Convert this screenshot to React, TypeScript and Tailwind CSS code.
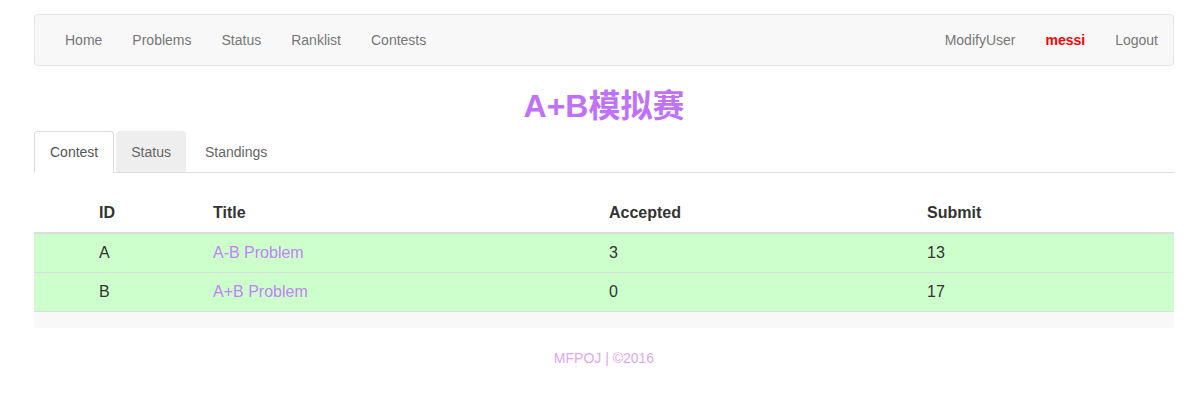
import React from "react";

const font = { fontFamily: '"Liberation Sans", Arial, "Noto Sans CJK SC", sans-serif' };

export default function App() {
  const navL = ["Home", "Problems", "Status", "Ranklist", "Contests"];
  const rows = [
    { id: "A", title: "A-B Problem", ac: "3", sub: "13" },
    { id: "B", title: "A+B Problem", ac: "0", sub: "17" },
  ];
  return (
    <div className="min-h-[409px] bg-white text-[14px] text-[#333]" style={font}>
      <div className="ml-[34px] w-[1140px] pt-[14px]">
        {/* navbar */}
        <div className="flex h-[52px] items-center justify-between rounded-[4px] border border-[#e7e7e7] bg-[#f8f8f8] px-[15px]">
          <div className="flex">
            {navL.map((t) => (
              <span key={t} className="px-[15px] leading-[20px] text-[#777]">{t}</span>
            ))}
          </div>
          <div className="-mr-[15px] flex">
            <span className="px-[15px] leading-[20px] text-[#777]">ModifyUser</span>
            <span className="px-[15px] font-bold leading-[20px] text-[#ff0000]">messi</span>
            <span className="px-[15px] leading-[20px] text-[#777]">Logout</span>
          </div>
        </div>

        {/* title */}
        <h2 className="mt-[24px] mb-[8px] text-center text-[32px] font-bold leading-[33px] text-[#bf72f7]">
          A+B模拟赛
        </h2>

        {/* tabs */}
        <div className="flex h-[42px] items-end border-b border-[#ddd]">
          <div className="-mb-px mr-[2px] flex h-[42px] items-center rounded-t-[4px] border border-b-white border-[#ddd] bg-white px-[15px] pt-[1px] text-[#555]">
            Contest
          </div>
          <div className="mr-[2px] flex h-[41px] items-center rounded-t-[4px] bg-[#eee] px-[15px] pt-[2px] text-[#666]">
            Status
          </div>
          <div className="flex h-[41px] items-center px-[17px] pt-[2px] text-[#666]">Standings</div>
        </div>

        {/* table */}
        <div className="mt-[21px] text-[16px]">
          <div className="flex h-[40px] items-center border-b-2 border-[#ddd] font-bold text-[#333]">
            <div className="w-[57px]" />
            <div className="w-[114px] pl-[8px]">ID</div>
            <div className="w-[396px] pl-[8px]">Title</div>
            <div className="w-[318px] pl-[8px]">Accepted</div>
            <div className="flex-1 pl-[8px]">Submit</div>
          </div>
          {rows.map((r) => (
            <div key={r.id} className="flex h-[39px] items-center border-b border-[#dddddd] bg-[#ccffcc] text-[#333]">
              <div className="w-[57px]" />
              <div className="w-[114px] pl-[8px]">{r.id}</div>
              <div className="w-[396px] pl-[8px] text-[#c383f6]">{r.title}</div>
              <div className="w-[318px] pl-[8px]">{r.ac}</div>
              <div className="flex-1 pl-[8px]">{r.sub}</div>
            </div>
          ))}
          <div className="h-[16px] bg-[#f8f8f8]" />
        </div>

        {/* footer */}
        <div className="mt-[20px] text-center text-[14px] leading-[20px] text-[#dca6f6]">MFPOJ | ©2016</div>
      </div>
    </div>
  );
}
